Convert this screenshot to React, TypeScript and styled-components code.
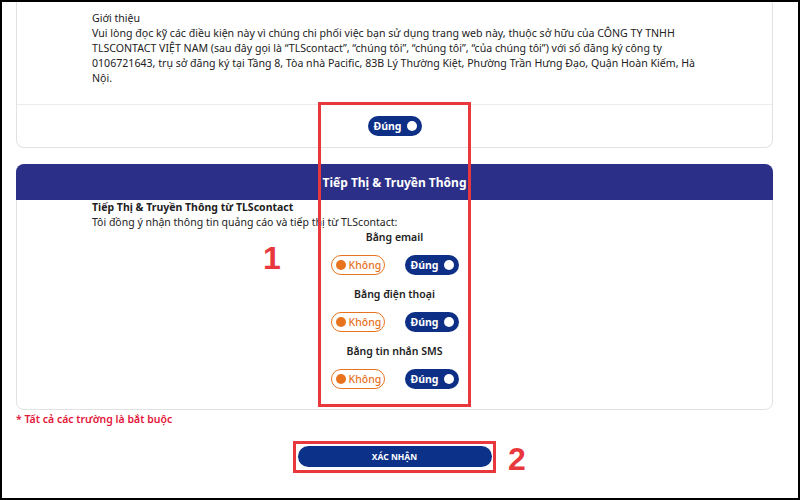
import React from "react";
import styled, { createGlobalStyle } from "styled-components";

const GlobalStyle = createGlobalStyle`
  body {
    margin: 0;
    background: #fff;
    font-family: "Noto Sans", "Open Sans", sans-serif;
    color: #222;
  }
`;

const channels = ["Bằng email", "Bằng điện thoại", "Bằng tin nhắn SMS"];

const App: React.FC = () => {
  return (
    <Frame>
      <GlobalStyle />
      <TermsCard>
        <TermsText>
          Giới thiệu
          <br />
          Vui lòng đọc kỹ các điều kiện này vì chúng chi phối việc bạn sử dụng trang web này, thuộc sở hữu của CÔNG TY TNHH
          <br />
          TLSCONTACT VIỆT NAM (sau đây gọi là “TLScontact”, “chúng tôi”, “chúng tôi”, “của chúng tôi”) với số đăng ký công ty
          <br />
          0106721643, trụ sở đăng ký tại Tầng 8, Tòa nhà Pacific, 83B Lý Thường Kiệt, Phường Trần Hưng Đạo, Quận Hoàn Kiếm, Hà
          <br />
          Nội.
        </TermsText>
        <TermsFooter>
          <Toggle $on>
            Đúng
            <Dot $on />
          </Toggle>
        </TermsFooter>
      </TermsCard>

      <MarketingCard>
        <CardHeader>Tiếp Thị &amp; Truyền Thông</CardHeader>
        <Intro>
          <strong>Tiếp Thị &amp; Truyền Thông từ TLScontact</strong>
          <br />
          Tôi đồng ý nhận thông tin quảng cáo và tiếp thị từ TLScontact:
        </Intro>
        <Options>
          {channels.map((c) => (
            <Option key={c}>
              <OptionLabel>{c}</OptionLabel>
              <ToggleRow>
                <Toggle>
                  <Dot />
                  Không
                </Toggle>
                <Toggle $on>
                  Đúng
                  <Dot $on />
                </Toggle>
              </ToggleRow>
            </Option>
          ))}
        </Options>
      </MarketingCard>

      <Required>* Tất cả các trường là bắt buộc</Required>

      <ButtonRow>
        <SubmitButton>XÁC NHẬN</SubmitButton>
      </ButtonRow>

      <Mark $x={316} $y={100} $w={153} $h={305} />
      <Mark $x={291} $y={439} $w={203} $h={32} />
      <Number $x={261} $y={240}>1</Number>
      <Number $x={506} $y={441}>2</Number>
    </Frame>
  );
};

export default App;

const Frame = styled.div`
  position: relative;
  width: 800px;
  height: 500px;
  box-sizing: border-box;
  border: 2px solid #000;
  padding: 0 25px 0 14px;
  background: #fff;
  overflow: hidden;
`;

const TermsCard = styled.section`
  border: 1px solid #e2e2e2;
  border-top: none;
  border-radius: 0 0 8px 8px;
`;

const TermsText = styled.div`
  padding: 9px 20px 18px 75px;
  font-size: 10.6px;
  line-height: 15px;
  color: #222;
`;

const TermsFooter = styled.div`
  border-top: 1px solid #ececec;
  padding: 11px 0;
  display: flex;
  justify-content: center;
`;

const Toggle = styled.div<{ $on?: boolean }>`
  box-sizing: border-box;
  width: 54px;
  height: 20px;
  border-radius: 10px;
  display: flex;
  align-items: center;
  justify-content: ${(p) => (p.$on ? "flex-end" : "flex-start")};
  gap: ${(p) => (p.$on ? "5px" : "3px")};
  padding: ${(p) => (p.$on ? "0 5px 0 7px" : "0 3px 0 4px")};
  font-size: 10.5px;
  font-weight: ${(p) => (p.$on ? 700 : 500)};
  background: ${(p) => (p.$on ? "#0e2f86" : "#fff")};
  color: ${(p) => (p.$on ? "#fff" : "#e8731e")};
  border: ${(p) => (p.$on ? "none" : "1px solid #e8731e")};
`;

const Dot = styled.span<{ $on?: boolean }>`
  width: 10px;
  height: 10px;
  border-radius: 50%;
  flex-shrink: 0;
  background: ${(p) => (p.$on ? "#fff" : "#e8731e")};
`;

const MarketingCard = styled.section`
  margin-top: 16px;
  border: 1px solid #e2e2e2;
  border-radius: 8px;
  padding-bottom: 20px;
`;

const CardHeader = styled.div`
  margin: -1px -1px 0;
  height: 36px;
  border-radius: 8px 8px 0 0;
  background: #2b2f88;
  color: #fff;
  font-size: 12px;
  font-weight: 700;
  display: flex;
  align-items: center;
  justify-content: center;
`;

const Intro = styled.div`
  padding-left: 75px;
  font-size: 10.5px;
  line-height: 15px;
  color: #222;

  strong {
    font-weight: 700;
  }
`;

const Options = styled.div`
  display: flex;
  flex-direction: column;
  align-items: center;
  gap: 12px;
`;

const Option = styled.div`
  display: flex;
  flex-direction: column;
  align-items: center;
  gap: 10px;
`;

const OptionLabel = styled.div`
  font-size: 10.5px;
  line-height: 15px;
  font-weight: 600;
  color: #222;
`;

const ToggleRow = styled.div`
  display: flex;
  gap: 20px;
`;

const Required = styled.div`
  margin-top: 2px;
  font-size: 10.5px;
  line-height: 15px;
  font-weight: 600;
  color: #e4163a;
`;

const ButtonRow = styled.div`
  margin-top: 19px;
  display: flex;
  justify-content: center;
`;

const SubmitButton = styled.button`
  width: 194px;
  height: 21px;
  border: none;
  border-radius: 11px;
  background: #0c3189;
  color: #fff;
  font-family: "Noto Sans", sans-serif;
  font-size: 8.5px;
  font-weight: 700;
  padding: 0;
`;

const Mark = styled.div<{ $x: number; $y: number; $w: number; $h: number }>`
  position: absolute;
  left: ${(p) => p.$x}px;
  top: ${(p) => p.$y}px;
  width: ${(p) => p.$w}px;
  height: ${(p) => p.$h}px;
  box-sizing: border-box;
  border: 3px solid #e8383d;
`;

const Number = styled.div<{ $x: number; $y: number }>`
  position: absolute;
  left: ${(p) => p.$x}px;
  top: ${(p) => p.$y}px;
  font-family: "Liberation Sans", Arial, sans-serif;
  font-size: 32px;
  line-height: 32px;
  font-weight: 700;
  color: #e8383d;
`;
